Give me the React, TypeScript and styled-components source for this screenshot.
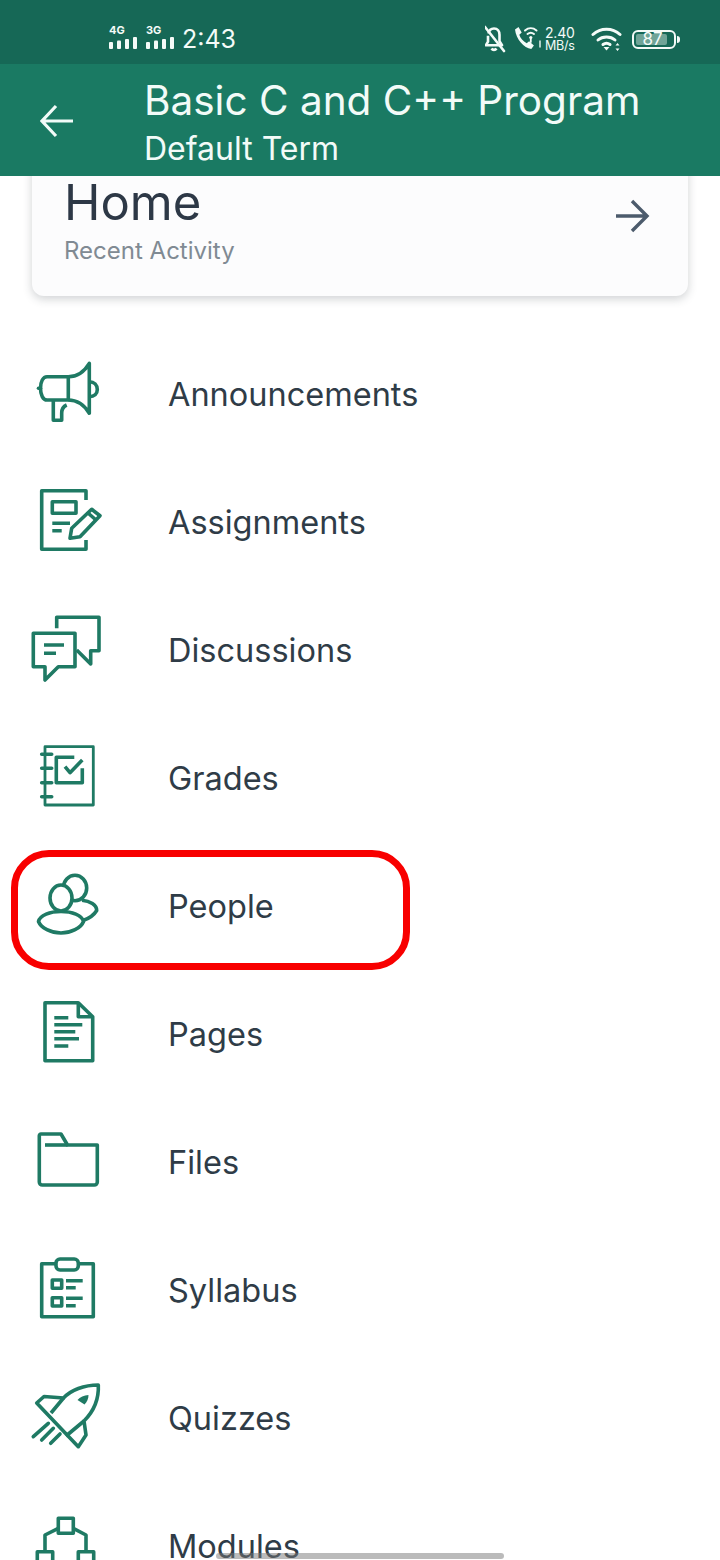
import React from 'react';
import styled, { createGlobalStyle } from 'styled-components';

const GlobalStyle = createGlobalStyle`
  html, body {
    margin: 0;
    padding: 0;
    background: #ffffff;
  }
  body {
    font-family: Inter, "Noto Sans", sans-serif;
  }
`;

const Screen = styled.div`
  position: relative;
  width: 720px;
  height: 1560px;
  display: flex;
  flex-direction: column;
  overflow: hidden;
  background: #fff;
`;

const StatusBar = styled.div`
  height: 64px;
  flex: none;
  background: #166856;
  color: #f4fbf8;
  display: flex;
  align-items: center;
  justify-content: space-between;
  padding: 14px 44px 0 109px;
  box-sizing: border-box;
`;

const StatusLeft = styled.div`
  display: flex;
  align-items: center;
  gap: 9px;
`;

const StatusRight = styled.div`
  display: flex;
  align-items: center;
`;

const Signal = styled.div`
  width: 28px;
  height: 24px;
  display: flex;
  flex-direction: column;
  justify-content: space-between;
  margin-top: -5px;
`;

const SignalLabel = styled.span`
  font-size: 11px;
  line-height: 11px;
  font-weight: 700;
`;

const Clock = styled.span`
  font-size: 25px;
  line-height: 28px;
  margin-left: -1px;
`;

const Speed = styled.div`
  display: flex;
  flex-direction: column;
  width: 34px;
  margin: 0 12px 0 6px;
  font-size: 14px;
  line-height: 13px;
  letter-spacing: -0.2px;
  white-space: nowrap;

  span + span {
    font-size: 12.5px;
  }
`;

const Battery = styled.div`
  position: relative;
  width: 44px;
  height: 19px;
  margin-left: 9px;
  border: 2px solid #f4fbf8;
  border-radius: 6px;
  box-sizing: border-box;
  display: flex;
  align-items: center;
  justify-content: center;
  font-size: 17px;
  line-height: 15px;
  padding: 0 3px 0 0;

  &::before {
    content: '';
    position: absolute;
    left: 2px;
    top: 2px;
    bottom: 2px;
    width: 31px;
    border-radius: 2px;
    background: #6fa497;
  }

  &::after {
    content: '';
    position: absolute;
    right: -6px;
    top: 4px;
    width: 3px;
    height: 7px;
    border-radius: 0 3px 3px 0;
    background: #f4fbf8;
  }

  span {
    position: relative;
  }
`;

const AppBar = styled.header`
  height: 112px;
  flex: none;
  background: #1a7a63;
  color: #f2fbf8;
  display: flex;
  align-items: center;
  padding: 0 0 0 40px;
  box-sizing: border-box;
  position: relative;
  z-index: 1;
`;

const BackIcon = styled.svg`
  width: 34px;
  height: 34px;
  flex: none;
  margin-top: 1px;
`;

const AppTitles = styled.div`
  margin: 4px 0 0 70px;
  display: flex;
  flex-direction: column;
`;

const AppTitle = styled.div`
  font-size: 40.5px;
  line-height: 48px;
  margin-top: 1px;
  white-space: nowrap;
`;

const AppSubtitle = styled.div`
  font-size: 32px;
  line-height: 38px;
  margin-top: 5px;
`;

const Content = styled.main`
  flex: 1;
  min-height: 0;
  overflow: hidden;
`;

const HomeCard = styled.section`
  margin: -24px 32px 0;
  height: 144px;
  box-sizing: border-box;
  padding: 24px 38px 0 32px;
  background: #fcfcfd;
  border-radius: 12px;
  box-shadow: 0 3px 10px rgba(40, 50, 60, 0.22);
  display: flex;
  align-items: center;
  justify-content: space-between;
`;

const HomeTitle = styled.div`
  font-size: 49px;
  line-height: 48px;
  color: #2d3846;
  margin-top: -28px;
`;

const HomeSub = styled.div`
  font-size: 24px;
  line-height: 30px;
  color: #808a93;
  margin-top: 9px;
`;

const ForwardIcon = styled.svg`
  width: 36px;
  height: 36px;
  flex: none;
  margin-top: -40px;
`;

const MenuList = styled.nav`
  margin-top: 34px;
  display: flex;
  flex-direction: column;
`;

const MenuRow = styled.div<{ $marked?: boolean }>`
  position: relative;
  height: 128px;
  flex: none;
  padding-left: 24px;
  display: flex;
  align-items: center;
  gap: 64px;
  font-size: 32.5px;
  color: #2f3c47;

  ${(p) =>
    p.$marked &&
    `&::after {
      content: '';
      position: absolute;
      left: 11px;
      top: 8px;
      width: 399px;
      height: 120px;
      box-sizing: border-box;
      border: 7px solid #f80000;
      border-radius: 38px;
    }`}
`;

const MenuIcon = styled.svg`
  width: 80px;
  height: 80px;
  flex: none;
  fill: none;
  stroke: #1f7a64;
  stroke-width: 3.6;
  stroke-linejoin: round;
`;

const HomeBar = styled.div`
  position: absolute;
  left: 216px;
  bottom: 1px;
  width: 288px;
  height: 6px;
  border-radius: 3px;
  background: rgba(120, 120, 120, 0.5);
`;

const SignalBars = () => (
  <svg width="28" height="12" viewBox="0 0 28 12">
    <g fill="#f4fbf8">
      <rect x="0" y="5" width="4" height="7" rx="1" />
      <rect x="8" y="3.500" width="4" height="8.500" rx="1" />
      <rect x="16" y="2" width="4" height="10" rx="1" />
      <rect x="24" y="0" width="4" height="12" rx="1" />
    </g>
  </svg>
);

const BellOffIcon = () => (
  <svg width="24" height="28" viewBox="3 0 24 28" fill="none" stroke="#f4fbf8" strokeWidth="2.6" strokeLinejoin="round">
    <path d="M6.500 8.500C7 5.500 9 3.500 12 3.500c3.600 0 5.500 2.800 5.500 6.200v6.500l2.500 4H4l2-3.500v-6" />
    <path d="M3 2l19 24" strokeLinecap="round" />
    <path d="M9.500 23.500a3 3 0 0 0 5 0" />
  </svg>
);

const WifiCallIcon = () => (
  <svg width="30" height="30" viewBox="-4 0 30 30" overflow="visible" fill="none" stroke="#f4fbf8" strokeLinecap="round">
    <path
      d="M2 5.500 5.500 3l3.200 5.500-2.400 2.200c1 3.200 3.800 6.600 7.400 8.600l2.400-2 4.800 4.200-2.600 3.400C11 24.500 3 15 2 5.500Z"
      fill="#f4fbf8"
      stroke="none"
    />
    <path d="M12 6.500c3.500-3 8-3 11.500 0" strokeWidth="2" />
    <path d="M14.500 10c2-1.600 4.500-1.600 6.500 0" strokeWidth="2" />
    <circle cx="17.800" cy="13.500" r="1.600" fill="#f4fbf8" stroke="none" />
    <path d="M17.800 15v3" strokeWidth="1.800" />
    <path d="M27 17v6" strokeWidth="1.400" />
  </svg>
);

const WifiIcon = () => (
  <svg width="32" height="26" viewBox="0 0 32 26" fill="none" stroke="#f4fbf8" strokeWidth="3" strokeLinecap="round">
    <path d="M2 8.500c7.500-7 19.500-7 27 0" />
    <path d="M7 14c4.500-4 12.500-4 17 0" />
    <path d="M12 18.500c2-1.500 5-1.500 7 0" />
    <path d="M12.500 21h6l-3 3.500Z" fill="#f4fbf8" stroke="none" />
    <path d="M26.500 17l2 2.500h-4ZM26.500 25l2-2.500h-4Z" fill="#f4fbf8" stroke="none" />
  </svg>
);

const icons: Record<string, React.ReactNode> = {
  Announcements: (
    <>
      <path d="M44.300 22.700H23c-4 0-6.500 5-6.500 11.500S19 46 23 46h21.300Z" />
      <path d="M44.300 22.700c9 0 16-5 21-13.400v50c-5-8.300-12-13.300-21-13.300" />
      <path d="M65.300 27.700c5 0 8 3.500 8 7.800s-3 7.200-8 7.200" />
      <path d="M29.300 46v20.300h8.400V59c0-4 1.500-6.500 5-8" />
      <path d="M16.500 34.300h-2" strokeLinecap="round" />
    </>
  ),
  Assignments: (
    <>
      <path d="M62 18V8.700H17.700v58.600H62V58" />
      <rect x="28.300" y="19.700" width="23.700" height="11.600" />
      <path d="M28.300 41.300H46M28.300 48.700h9.400" />
      <path d="M46 56.300l1.700-10 20-19 8.300 6.400-20 21Z" />
      <path d="M64 31l8 7" />
    </>
  ),
  Discussions: (
    <>
      <path d="M32.700 18.300V7.300H75v33.400h-8.300V54L52.700 40" />
      <path d="M9.300 23.300H51v33.400H34.300L21 70V56.700H9.300Z" />
      <path d="M20 35h20M20 43.300h12" />
    </>
  ),
  Grades: (
    <>
      <rect x="21" y="8.700" width="48.300" height="58.300" strokeWidth="2.800" />
      <path d="M17.700 16.300h10M17.700 30.300h10M17.700 44.700h10M17.700 58.700h10" strokeLinecap="round" />
      <path d="M50.300 19.300H32.300v25.400h26V30.300" />
      <path d="M41 28.700l5 6 12.300-12.700" />
    </>
  ),
  People: (
    <>
      <ellipse cx="51" cy="22" rx="11.700" ry="12.700" />
      <path d="M58 34.300c8 .7 14.700 4.700 14.700 10.200-2.700 4.500-7.700 8-13.700 10" />
      <path d="M14.500 55.500C16 49 26 45.500 37 45.500s21 3.500 22.500 10C57 62 47 67 37 67s-20-5-22.500-11.500Z" fill="#fff" />
      <ellipse cx="37" cy="32" rx="11" ry="13" fill="#fff" />
    </>
  ),
  Pages: (
    <>
      <path d="M21 8.700h33.300l14.400 14v44H21Z" />
      <path d="M54.300 8.700v14h14.400" />
      <path d="M30.300 23.700h14M30.300 30.700h28M30.300 37.700h21M30.300 44.700h24.700M30.300 52h14" />
    </>
  ),
  Files: (
    <>
      <path d="M17 12h20l6.500 11h29.800v37a3 3 0 0 1-3 3H18.300a3 3 0 0 1-3-3V13.700A1.700 1.700 0 0 1 17 12Z" />
      <path d="M21 23h22.500" />
    </>
  ),
  Syllabus: (
    <>
      <path d="M32 13.700H17.700v53h51.600v-53H54" />
      <rect x="32" y="9" width="22.300" height="11" rx="4" />
      <rect x="28.300" y="30" width="9.400" height="8.300" />
      <rect x="28.300" y="47.700" width="9.400" height="8.300" />
      <path d="M42 30.700h16.700M42 37.700h9.700M42 48.300h16.700M42 55.700h9.700" />
    </>
  ),
  Quizzes: (
    <>
      <path d="M12.700 25l7.300-6.500 19.500 1.500C47 12 60 7 74.300 7c.7 14-4.300 26-14.300 36l2 14-7.700 11.700Z" />
      <path d="M39.500 20 27 35M60 43 42 58" />
      <path d="M53.500 22c2.500-3 6.500-4.500 11-5 0 4-1.500 7-4 9.500Z" fill="#1f7a64" stroke="none" />
      <path d="M9.300 58.700l15-13.400M17.700 62l11.600-11.700M26.700 65.300 36 56" strokeLinecap="round" />
    </>
  ),
  Modules: (
    <>
      <rect x="34.300" y="12.300" width="15" height="15" />
      <path d="M34.300 22.300 21 29v16.700M49.300 22.300 62 29v16.700" />
      <rect x="13.300" y="45.700" width="15.400" height="15" />
      <rect x="54.300" y="45.700" width="15.400" height="15" />
    </>
  ),
};

const menuItems = [
  'Announcements',
  'Assignments',
  'Discussions',
  'Grades',
  'People',
  'Pages',
  'Files',
  'Syllabus',
  'Quizzes',
  'Modules',
];

const App = () => {
  return (
    <Screen>
      <GlobalStyle />
      <StatusBar>
        <StatusLeft>
          <Signal>
            <SignalLabel>4G</SignalLabel>
            <SignalBars />
          </Signal>
          <Signal>
            <SignalLabel>3G</SignalLabel>
            <SignalBars />
          </Signal>
          <Clock>2:43</Clock>
        </StatusLeft>
        <StatusRight>
          <BellOffIcon />
          <WifiCallIcon />
          <Speed>
            <span>2.40</span>
            <span>MB/s</span>
          </Speed>
          <WifiIcon />
          <Battery>
            <span>87</span>
          </Battery>
        </StatusRight>
      </StatusBar>

      <AppBar>
        <BackIcon viewBox="0 0 34 34" fill="none" stroke="#f2fbf8" strokeWidth="3.2">
          <path d="M33 17H2M16 2 2 17l14 15" />
        </BackIcon>
        <AppTitles>
          <AppTitle>Basic C and C++ Program</AppTitle>
          <AppSubtitle>Default Term</AppSubtitle>
        </AppTitles>
      </AppBar>

      <Content>
        <HomeCard>
          <div>
            <HomeTitle>Home</HomeTitle>
            <HomeSub>Recent Activity</HomeSub>
          </div>
          <ForwardIcon viewBox="0 0 36 36" fill="none" stroke="#4c5b6c" strokeWidth="3.4">
            <path d="M2 18h31M18 3l15 15-15 15" />
          </ForwardIcon>
        </HomeCard>

        <MenuList>
          {menuItems.map((item) => (
            <MenuRow key={item} $marked={item === 'People'}>
              <MenuIcon viewBox="0 0 80 80">{icons[item]}</MenuIcon>
              {item}
            </MenuRow>
          ))}
        </MenuList>
      </Content>

      <HomeBar />
    </Screen>
  );
};

export default App;
